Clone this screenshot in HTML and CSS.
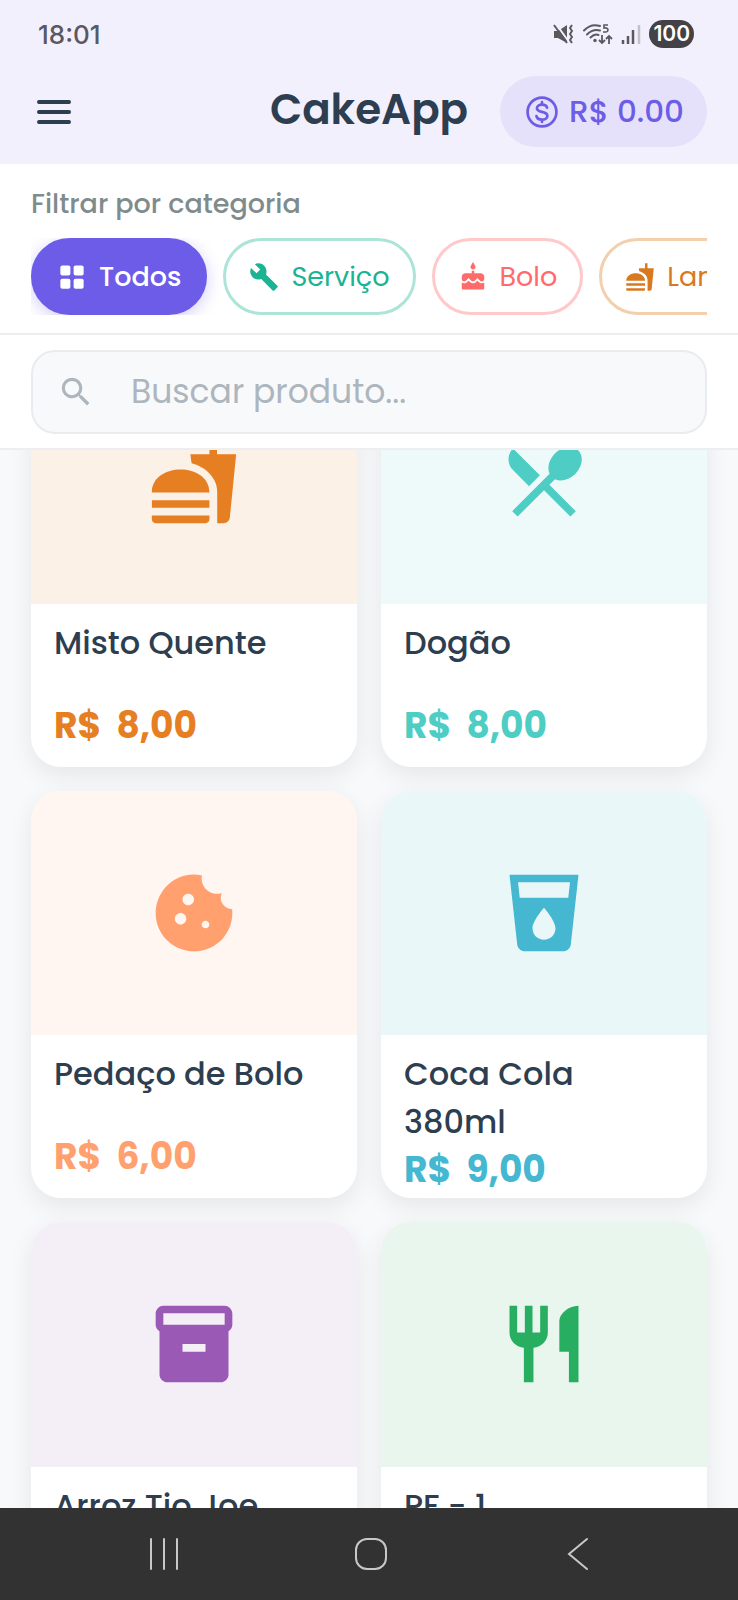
FILE: index.html
```html
<!DOCTYPE html>
<html lang="pt-BR">
  <head>
    <meta charset="UTF-8" />
    <meta name="viewport" content="width=device-width, initial-scale=1.0" />
    <title>CakeApp</title>
    <link rel="stylesheet" href="styles.css" />
  </head>
  <body>
    <div class="top">
      <div class="status-bar">
        <span class="clock">18:01</span>
        <div class="status-icons">
          <svg class="icon-mute" viewBox="0 0 22 20" aria-hidden="true">
            <path d="M1 7h4l9-6v18l-9-5H1z" fill="#5b5860" />
            <path d="M3 0l13 18" stroke="#f3f0fe" stroke-width="2" />
            <path d="M1 1l13 18" stroke="#5b5860" stroke-width="2" />
            <path d="M19 1l-2 3 2 3-2 3 2 3-2 3 2 3" fill="none" stroke="#5b5860" stroke-width="2" stroke-linejoin="round" />
          </svg>
          <svg class="icon-wifi" viewBox="0 0 30 22" aria-hidden="true">
            <g fill="none" stroke="#5b5860" stroke-width="2" stroke-linecap="round">
              <path d="M1 7.500Q8 0 17 3" />
              <path d="M4 11.500q6-6 13-4" />
              <path d="M7.500 14.500q4-4 8-2.500" />
            </g>
            <circle cx="12" cy="17.500" r="1.700" fill="#5b5860" />
            <g fill="none" stroke="#5b5860">
              <path d="M25 2h-4v3c5-1 5 4 1.500 4H20" stroke-width="1.600" />
              <path d="M19 12v8M16 17l3 3 3-3M26 21v-8M23 16l3-3 3 3" stroke-width="1.800" />
            </g>
          </svg>
          <svg class="icon-signal" viewBox="0 0 20 20" aria-hidden="true">
            <path d="M2 16v4M7 12v8M12 6v14" stroke="#5b5860" stroke-width="2.500" />
            <path d="M18 1v19" stroke="#c3c0ca" stroke-width="2.500" />
          </svg>
          <span class="battery">100</span>
        </div>
      </div>

      <header class="header">
        <button class="menu-button" type="button" aria-label="Menu">
          <svg viewBox="0 0 34 24" aria-hidden="true">
            <path d="M2 2h30M2 12h30M2 22h30" stroke="#2c3e50" stroke-width="4" stroke-linecap="round" />
          </svg>
        </button>
        <h1>CakeApp</h1>
        <button class="balance" type="button">
          <svg viewBox="0 0 24 24" aria-hidden="true">
            <g fill="none" stroke="currentColor" stroke-width="1.700" stroke-linecap="round">
              <circle cx="12" cy="12" r="9.100" />
              <path d="M15.200 9.300c-.3-1.200-1.500-2-3.200-2s-3.200.9-3.200 2.300c0 3.200 6.600 1.500 6.600 4.900 0 1.400-1.500 2.300-3.400 2.300s-3.200-.9-3.500-2.200M12 5.800v1.500M12 16.800v1.500" />
            </g>
          </svg>
          <span>R$ 0.00</span>
        </button>
      </header>
    </div>

    <section class="filters">
      <h2>Filtrar por categoria</h2>
      <div class="chips">
        <button class="chip chip-active" type="button">
          <svg viewBox="0 0 24 24" aria-hidden="true">
            <rect x="2.700" y="2.700" width="8" height="8" rx="1.500" />
            <rect x="13.300" y="2.700" width="8" height="8" rx="1.500" />
            <rect x="2.700" y="13.300" width="8" height="8" rx="1.500" />
            <rect x="13.300" y="13.300" width="8" height="8" rx="1.500" />
          </svg>
          Todos
        </button>
        <button class="chip chip-servico" type="button">
          <svg viewBox="0 0 24 24" aria-hidden="true">
            <path d="M22.700 19l-9.100-9.100c.9-2.300.4-5-1.500-6.900-2-2-5-2.400-7.400-1.300L9 6 6 9 1.600 4.700C.4 7.100.9 10.100 2.900 12.100c1.900 1.900 4.600 2.400 6.900 1.500l9.100 9.100c.4.4 1 .4 1.400 0l2.300-2.300c.5-.4.5-1.100.1-1.400z" />
          </svg>
          Serviço
        </button>
        <button class="chip chip-bolo" type="button">
          <svg viewBox="0 0 24 24" aria-hidden="true">
            <path d="M12 6c1.110 0 2-.9 2-2 0-.38-.1-.73-.29-1.030L12 0l-1.710 2.970c-.19.3-.29.65-.29 1.030 0 1.100.9 2 2 2zm4.600 9.990l-1.070-1.070-1.080 1.070c-1.300 1.300-3.580 1.310-4.890 0l-1.070-1.070-1.090 1.070C6.750 16.640 5.880 17 4.960 17c-.73 0-1.400-.23-1.960-.61V21c0 .55.45 1 1 1h16c.55 0 1-.45 1-1v-4.610c-.56.38-1.230.61-1.960.61-.92 0-1.790-.36-2.440-1.010zM18 9h-5V7h-2v2H6c-1.660 0-3 1.340-3 3v1.540c0 1.080.88 1.960 1.960 1.960.52 0 1.020-.2 1.380-.57l2.140-2.130 2.130 2.130c.74.74 2.030.74 2.770 0l2.140-2.130 2.130 2.130c.37.37.86.57 1.380.57 1.080 0 1.960-.88 1.960-1.960V12C21 10.340 19.660 9 18 9z" />
          </svg>
          Bolo
        </button>
        <button class="chip chip-lanche" type="button">
          <svg viewBox="0 0 24 24" aria-hidden="true">
            <path d="M18.060 22.990h1.660c.84 0 1.530-.64 1.630-1.460L23 5.050h-5V1h-1.970v4.050h-4.970l.3 2.340c1.710.47 3.310 1.320 4.270 2.260 1.440 1.420 2.430 2.890 2.430 5.290v8.050zM1 21.990V21h15.030v.99c0 .55-.45 1-1.010 1H2.010c-.56 0-1.010-.45-1.010-1zm15.030-7c0-8-15.030-8-15.030 0h15.030zM1.020 17h15v2h-15z" />
          </svg>
          Lanche
        </button>
      </div>
    </section>

    <section class="search">
      <label class="search-box">
        <svg viewBox="0 0 24 24" aria-hidden="true">
          <path d="M15.500 14h-.79l-.28-.27A6.471 6.471 0 0 0 16 9.500 6.500 6.500 0 1 0 9.500 16c1.610 0 3.090-.59 4.230-1.570l.27.28v.79l5 4.990L20.490 19l-4.990-5zm-6 0C7.010 14 5 11.990 5 9.500S7.010 5 9.500 5 14 7.010 14 9.500 11.990 14 9.500 14z" />
        </svg>
        <input type="text" placeholder="Buscar produto..." aria-label="Buscar produto" />
      </label>
    </section>

    <main class="products">
      <div class="grid">
        <article class="card card-orange">
          <div class="card-image">
            <svg viewBox="0 0 24 24" aria-hidden="true">
              <path d="M18.060 22.990h1.660c.84 0 1.530-.64 1.630-1.460L23 5.050h-5V1h-1.970v4.050h-4.970l.3 2.340c1.710.47 3.310 1.320 4.270 2.260 1.440 1.420 2.430 2.890 2.430 5.290v8.050zM1 21.990V21h15.030v.99c0 .55-.45 1-1.010 1H2.010c-.56 0-1.010-.45-1.010-1zm15.030-7c0-8-15.030-8-15.030 0h15.030zM1.020 17h15v2h-15z" />
            </svg>
          </div>
          <div class="card-body">
            <h3>Misto Quente</h3>
            <p class="price">R$&nbsp; 8,00</p>
          </div>
        </article>

        <article class="card card-teal">
          <div class="card-image">
            <svg viewBox="0 0 24 24" aria-hidden="true">
              <path d="M8.100 13.340l2.830-2.830L3.910 3.500c-1.560 1.560-1.560 4.090 0 5.660l4.190 4.180zm6.780-1.810c1.530.71 3.680.21 5.270-1.380 1.910-1.910 2.280-4.650.81-6.120-1.460-1.460-4.200-1.100-6.120.81-1.590 1.590-2.090 3.740-1.380 5.270L3.700 19.870l1.410 1.410L12 14.410l6.880 6.880 1.410-1.410L13.410 13l1.470-1.470z" />
            </svg>
          </div>
          <div class="card-body">
            <h3>Dogão</h3>
            <p class="price">R$&nbsp; 8,00</p>
          </div>
        </article>

        <article class="card card-peach">
          <div class="card-image">
            <svg viewBox="0 0 24 24" aria-hidden="true">
              <path d="M21.950 10.990c-1.790-.03-3.700-1.950-2.680-4.220-2.980 1-5.770-1.590-5.190-4.560C6.950.71 2 6.580 2 12c0 5.520 4.480 10 10 10 5.890 0 10.540-5.080 9.950-11.010zM8.500 15c-.83 0-1.500-.67-1.500-1.500S7.670 12 8.500 12s1.500.67 1.500 1.500S9.330 15 8.500 15zm2-5C9.670 10 9 9.330 9 8.500S9.670 7 10.500 7s1.500.67 1.500 1.500-.67 1.500-1.500 1.500zm4.500 6c-.55 0-1-.45-1-1s.45-1 1-1 1 .45 1 1-.45 1-1 1z" />
            </svg>
          </div>
          <div class="card-body">
            <h3>Pedaço de Bolo</h3>
            <p class="price">R$&nbsp; 6,00</p>
          </div>
        </article>

        <article class="card card-blue">
          <div class="card-image">
            <svg viewBox="0 0 24 24" aria-hidden="true">
              <path d="M3 2l2.010 18.230C5.130 21.230 5.970 22 7 22h10c1.030 0 1.870-.77 1.990-1.770L21 2H3zm9 17c-1.660 0-3-1.340-3-3 0-2 3-5.400 3-5.400s3 3.400 3 5.400c0 1.660-1.340 3-3 3zm6.330-11H5.670l-.44-4h13.550l-.45 4z" />
            </svg>
          </div>
          <div class="card-body">
            <h3>Coca Cola<br />380ml</h3>
            <p class="price">R$&nbsp; 9,00</p>
          </div>
        </article>

        <article class="card card-purple">
          <div class="card-image">
            <svg viewBox="0 0 24 24" aria-hidden="true">
              <path d="M20 2H4c-1 0-2 .9-2 2v3.010c0 .72.43 1.340 1 1.690V20c0 1.100 1.100 2 2 2h14c.9 0 2-.9 2-2V8.700c.57-.35 1-.97 1-1.690V4c0-1.100-1-2-2-2zm-5 12H9v-2h6v2zm5-7H4V4l16-.02V7z" />
            </svg>
          </div>
          <div class="card-body">
            <h3>Arroz Tio Joe</h3>
          </div>
        </article>

        <article class="card card-green">
          <div class="card-image">
            <svg viewBox="0 0 24 24" aria-hidden="true">
              <path d="M11 9H9V2H7v7H5V2H3v7c0 2.120 1.660 3.840 3.750 3.970V22h2.500v-9.030C11.340 12.840 13 11.120 13 9V2h-2v7zm5-3v8h2.500v8H21V2c-2.760 0-5 2.240-5 4z" />
            </svg>
          </div>
          <div class="card-body">
            <h3>PF - 1</h3>
          </div>
        </article>
      </div>
    </main>

    <nav class="system-nav">
      <button type="button" aria-label="Recentes">
        <svg viewBox="0 0 34 34" aria-hidden="true"><path d="M4 2v30M17 2v30M30 2v30" /></svg>
      </button>
      <button type="button" aria-label="Início">
        <svg viewBox="0 0 34 34" aria-hidden="true"><rect x="2" y="2" width="30" height="30" rx="11" /></svg>
      </button>
      <button type="button" aria-label="Voltar">
        <svg viewBox="0 0 34 34" aria-hidden="true"><path d="M26 2L8 17l18 15" /></svg>
      </button>
    </nav>
  </body>
</html>
```

FILE: styles.css
```css
* {
  box-sizing: border-box;
}

body {
  margin: 0;
  height: 100vh;
  display: flex;
  flex-direction: column;
  font-family: Poppins, Inter, sans-serif;
  color: #2c3e50;
  background-color: #f7f9fb;
}

h1,
h2,
h3,
p {
  margin: 0;
}

button {
  font-family: inherit;
  border: none;
  background: none;
  padding: 0;
  cursor: pointer;
}

svg {
  display: block;
  flex-shrink: 0;
}

/* Status bar and header */
.top {
  background-color: #f3f0fe;
}

.status-bar {
  height: 68px;
  padding: 0 44px 0 38px;
  display: flex;
  align-items: center;
  justify-content: space-between;
  font-family: Inter, sans-serif;
}

.clock {
  font-size: 26px;
  font-weight: 500;
  color: #5b5860;
}

.status-icons {
  display: flex;
  align-items: center;
  gap: 8px;
}

.icon-mute {
  width: 22px;
  height: 20px;
}

.icon-wifi {
  width: 30px;
  height: 22px;
}

.icon-signal {
  width: 20px;
  height: 20px;
}

.battery {
  padding: 0 4px;
  border-radius: 14px;
  background-color: #444246;
  color: #ffffff;
  font-size: 21px;
  font-weight: 600;
  line-height: 28px;
}

.header {
  display: grid;
  grid-template-columns: 1fr auto 1fr;
  align-items: center;
  padding: 8px 31px 17px;
}

.menu-button {
  justify-self: start;
  padding: 6px;
}

.menu-button svg {
  width: 34px;
  height: 24px;
}

h1 {
  margin-bottom: 4px;
  font-size: 42px;
  font-weight: 600;
  line-height: 60px;
}

.balance {
  justify-self: end;
  display: flex;
  align-items: center;
  gap: 8px;
  height: 71px;
  padding: 0 23px;
  border-radius: 36px;
  background-color: #e5e1fa;
  color: #6c5ce7;
  font-size: 31px;
  font-weight: 500;
}

.balance svg {
  width: 38px;
  height: 38px;
}

/* Category filter */
.filters {
  padding: 23px 31px 18px;
  background-color: #ffffff;
  border-bottom: 2px solid #ecedef;
}

h2 {
  margin-bottom: 17px;
  font-size: 27px;
  font-weight: 500;
  line-height: 34px;
  color: #7f8c8d;
}

.chips {
  display: flex;
  gap: 16px;
  overflow: hidden;
}

.chip {
  display: flex;
  flex-shrink: 0;
  align-items: center;
  gap: 12px;
  height: 77px;
  padding: 0 23px;
  border: 3px solid;
  border-radius: 39px;
  background-color: #ffffff;
  font-size: 27px;
}

.chip svg {
  width: 30px;
  height: 30px;
  fill: currentColor;
}

.chip-active {
  background-color: #6c5ce7;
  border-color: #6c5ce7;
  color: #ffffff;
  font-weight: 500;
  box-shadow: 0 4px 16px rgba(108, 92, 231, 0.3);
}

.chip-servico {
  color: #1ab394;
  border-color: #ace5d8;
}

.chip-bolo {
  color: #ff6b6b;
  border-color: #ffc8c9;
}

.chip-lanche {
  color: #d9791f;
  border-color: #f3cfae;
}

/* Search */
.search {
  padding: 15px 31px 14px;
  background-color: #ffffff;
  border-bottom: 2px solid #eceef0;
}

.search-box {
  display: flex;
  align-items: center;
  gap: 36px;
  height: 84px;
  padding: 0 24px;
  border: 2px solid #e9ecef;
  border-radius: 24px;
  background-color: #f8f9fb;
}

.search-box svg {
  width: 38px;
  height: 38px;
  fill: #adb5bd;
}

.search-box input {
  flex: 1;
  min-width: 0;
  padding: 0;
  border: none;
  outline: none;
  background: none;
  font-family: inherit;
  font-size: 33px;
  color: #2c3e50;
}

.search-box input::placeholder {
  color: #adb5bd;
}

/* Products */
.products {
  flex: 1;
  min-height: 0;
  overflow: hidden;
}

.grid {
  display: grid;
  grid-template-columns: 1fr 1fr;
  gap: 24px;
  margin-top: -91px;
  padding: 0 31px;
}

.card {
  overflow: hidden;
  border-radius: 30px;
  background-color: #ffffff;
  box-shadow: 0 8px 24px rgba(0, 0, 0, 0.08);
}

.card-image {
  display: flex;
  align-items: center;
  justify-content: center;
  aspect-ratio: 4 / 3;
}

.card-image svg {
  width: 92px;
  height: 92px;
  fill: currentColor;
}

.card-body {
  height: 163px;
  padding: 15px 23px 0;
}

h3 {
  min-height: 83px;
  font-size: 32px;
  font-weight: 500;
  line-height: 48px;
  color: #2c3e50;
}

.price {
  font-size: 36px;
  font-weight: 700;
  line-height: 48px;
}

.card-orange {
  color: #e67e22;
}

.card-orange .card-image {
  background-color: #fcf1e6;
}

.card-teal {
  color: #4ecdc4;
}

.card-teal .card-image {
  background-color: #edfaf9;
}

.card-peach {
  color: #ffa06e;
}

.card-peach .card-image {
  background-color: #fff5f1;
}

.card-blue {
  color: #45b7d1;
}

.card-blue .card-image {
  background-color: #e9f7f9;
}

.card-purple {
  color: #9b59b6;
}

.card-purple .card-image {
  background-color: #f4eef7;
}

.card-green {
  color: #27ae60;
}

.card-green .card-image {
  background-color: #e8f6ed;
}

/* Android navigation bar */
.system-nav {
  display: grid;
  grid-template-columns: repeat(3, 1fr);
  flex-shrink: 0;
  height: 92px;
  padding: 0 57px 0 60px;
  background-color: #323232;
}

.system-nav button {
  display: flex;
  align-items: center;
  justify-content: center;
}

.system-nav svg {
  width: 34px;
  height: 34px;
  fill: none;
  stroke: #c8c8c8;
  stroke-width: 2;
  stroke-linecap: round;
}
```
